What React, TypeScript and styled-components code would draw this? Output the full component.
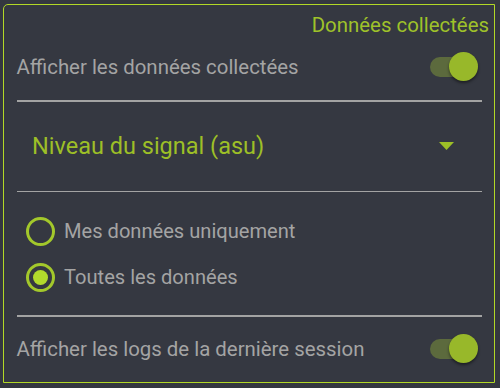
import React, { useState } from "react";
import styled, { createGlobalStyle } from "styled-components";

const GlobalStyle = createGlobalStyle`
  html, body {
    margin: 0;
    padding: 0;
    background: #343740;
  }
  body {
    font-family: Roboto, "Noto Sans", sans-serif;
  }
`;

const Panel = styled.div`
  margin: 4px 5px 4px 3px;
  width: 492px;
  box-sizing: border-box;
  border: 1.5px solid #b2d826;
  border-radius: 5px 0 0 0;
  background: #353841;
  display: flex;
  flex-direction: column;
`;

const Title = styled.div`
  height: 41px;
  line-height: 41px;
  text-align: right;
  padding-right: 5px;
  color: #9fc22a;
  font-size: 20.4px;
`;

const Row = styled.div<{ $height: number }>`
  display: flex;
  align-items: center;
  justify-content: space-between;
  height: ${(p) => p.$height}px;
  padding: 0 23px 0 12.5px;
`;

const Label = styled.span`
  color: #a4a4a4;
  font-size: 20.4px;
`;

const RadioLabel = styled(Label)`
  font-size: 20.1px;
`;

const Divider = styled.div<{ $top: number }>`
  height: 1.5px;
  background: #a3a3a3;
  margin: ${(p) => p.$top}px 12px 0 13px;
`;

const Track = styled.div<{ $on: boolean }>`
  position: relative;
  width: 41px;
  height: 20px;
  border-radius: 10px;
  background: ${(p) => (p.$on ? "#5c6a3d" : "#5a5d66")};
  cursor: pointer;
`;

const Thumb = styled.div<{ $on: boolean }>`
  position: absolute;
  top: -5px;
  left: ${(p) => (p.$on ? "19px" : "-7px")};
  width: 29px;
  height: 29px;
  border-radius: 50%;
  background: ${(p) => (p.$on ? "#98b82a" : "#bdbdbd")};
  box-shadow: 0 2px 3px rgba(0, 0, 0, 0.45);
`;

const Select = styled.div`
  display: flex;
  align-items: center;
  justify-content: space-between;
  height: 89px;
  padding: 0 40px 0 28px;
  cursor: pointer;
`;

const SelectText = styled.span`
  color: #9dbf27;
  font-size: 23.5px;
`;

const RadioGroup = styled.div`
  display: flex;
  flex-direction: column;
  padding: 16px 0 15px 0;
`;

const RadioRow = styled.label`
  display: flex;
  align-items: center;
  height: 46px;
  padding-left: 22px;
  gap: 9px;
  cursor: pointer;
`;

const RadioOuter = styled.span`
  display: flex;
  align-items: center;
  justify-content: center;
  width: 29px;
  height: 29px;
  box-sizing: border-box;
  border: 3px solid #a3c82b;
  border-radius: 50%;
`;

const RadioDot = styled.span`
  width: 15px;
  height: 15px;
  border-radius: 50%;
  background: #b2da2c;
`;

const Toggle = ({ on, onClick }: { on: boolean; onClick: () => void }) => (
  <Track $on={on} onClick={onClick}>
    <Thumb $on={on} />
  </Track>
);

export default function App() {
  const [showData, setShowData] = useState(true);
  const [showLogs, setShowLogs] = useState(true);
  const [scope, setScope] = useState("all");

  return (
    <>
      <GlobalStyle />
      <Panel>
        <Title>Données collectées</Title>
        <Row $height={42}>
          <Label>Afficher les données collectées</Label>
          <Toggle on={showData} onClick={() => setShowData(!showData)} />
        </Row>
        <Divider $top={12} />
        <Select>
          <SelectText>Niveau du signal (asu)</SelectText>
          <svg width="15" height="8" viewBox="0 0 15 8">
            <path d="M0 0 L15 0 L7.5 8 Z" fill="#9dbf27" />
          </svg>
        </Select>
        <Divider $top={0} />
        <RadioGroup>
          <RadioRow onClick={() => setScope("mine")}>
            <RadioOuter>{scope === "mine" && <RadioDot />}</RadioOuter>
            <RadioLabel>Mes données uniquement</RadioLabel>
          </RadioRow>
          <RadioRow onClick={() => setScope("all")}>
            <RadioOuter>{scope === "all" && <RadioDot />}</RadioOuter>
            <RadioLabel>Toutes les données</RadioLabel>
          </RadioRow>
        </RadioGroup>
        <Divider $top={0} />
        <Row $height={65}>
          <Label>Afficher les logs de la dernière session</Label>
          <Toggle on={showLogs} onClick={() => setShowLogs(!showLogs)} />
        </Row>
      </Panel>
    </>
  );
}
